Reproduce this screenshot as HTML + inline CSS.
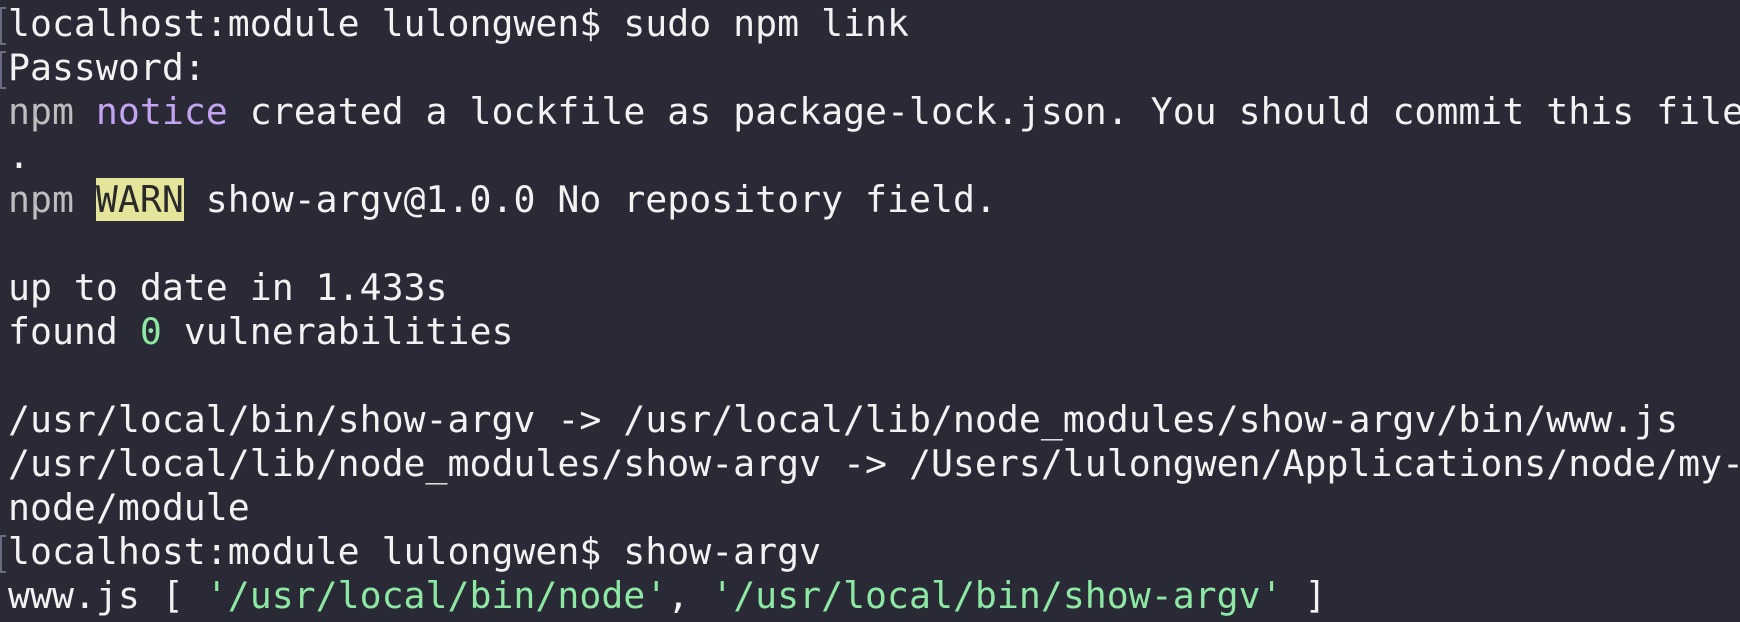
<!DOCTYPE html>
<html><head><meta charset="utf-8"><style>
html,body{margin:0;padding:0;background:#292a35;width:1740px;height:622px;overflow:hidden}
pre{margin:0;padding:2px 0 0 8px;font-family:"DejaVu Sans Mono","Liberation Mono",monospace;font-size:36.5px;line-height:44px;color:#f2f2f2;white-space:pre}
.g{color:#bdbdbd}.p{color:#c3a3f2}.w{background:#e4e49a;color:#2a2a2a}.n{color:#8ce8a2}
.m{position:absolute;left:0;width:4px;height:34px;border:2px solid #6a6a80;border-right:none}
</style></head><body>
<div class="m" style="top:7px"></div><div class="m" style="top:51px"></div><div class="m" style="top:535px"></div>
<pre>localhost:module lulongwen$ sudo npm link
Password:
<span class="g">npm</span> <span class="p">notice</span> created a lockfile as package-lock.json. You should commit this file
.
<span class="g">npm</span> <span class="w">WARN</span> show-argv@1.0.0 No repository field.

up to date in 1.433s
found <span class="n">0</span> vulnerabilities

/usr/local/bin/show-argv -&gt; /usr/local/lib/node_modules/show-argv/bin/www.js
/usr/local/lib/node_modules/show-argv -&gt; /Users/lulongwen/Applications/node/my-
node/module
localhost:module lulongwen$ show-argv
www.js [ <span class="n">'/usr/local/bin/node'</span>, <span class="n">'/usr/local/bin/show-argv'</span> ]</pre>
</body></html>
